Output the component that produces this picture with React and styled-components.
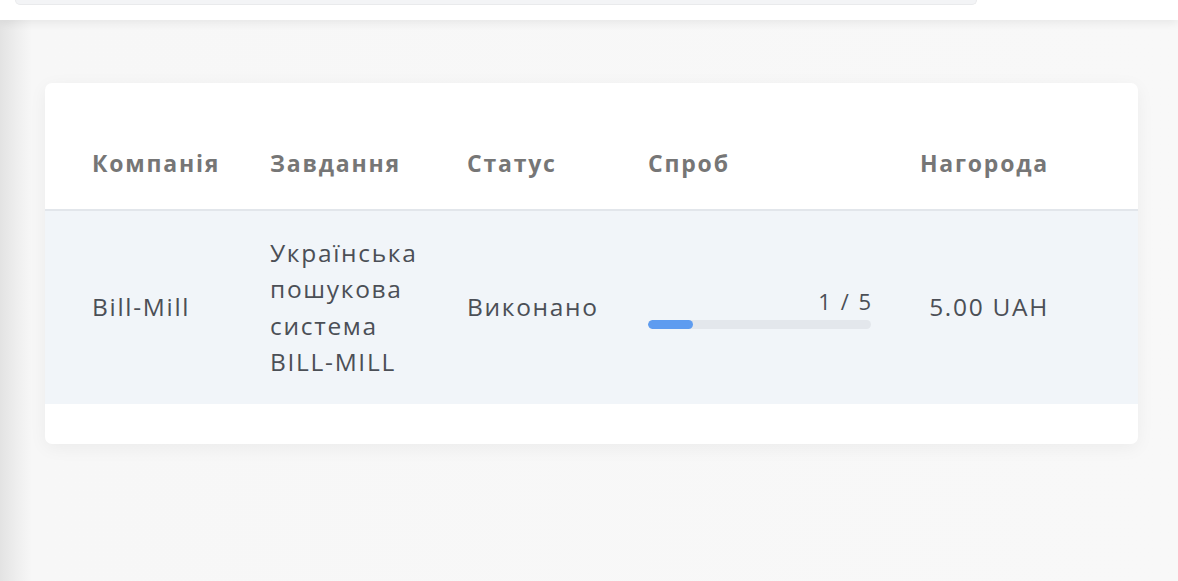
import styled, { createGlobalStyle } from "styled-components";

const GlobalStyle = createGlobalStyle`
  body {
    margin: 0;
    background: #f8f8f8;
    font-family: "Open Sans", "Noto Sans", sans-serif;
  }
`;

const tasks = [
  {
    company: "Bill-Mill",
    task: ["Українська", "пошукова", "система", "BILL-MILL"],
    status: "Виконано",
    tries: 1,
    maxTries: 5,
    reward: "5.00 UAH",
  },
];

const App = () => {
  return (
    <Page>
      <GlobalStyle />
      <TopBar>
        <SearchBox />
      </TopBar>
      <Main>
        <Card>
          <HeadRow>
            <HeadCell>Компанія</HeadCell>
            <HeadCell>Завдання</HeadCell>
            <HeadCell>Статус</HeadCell>
            <HeadCell>Спроб</HeadCell>
            <HeadCell $right>Нагорода</HeadCell>
          </HeadRow>
          {tasks.map((t) => (
            <Row key={t.company}>
              <Cell>{t.company}</Cell>
              <Cell>
                {t.task.map((line) => (
                  <div key={line}>{line}</div>
                ))}
              </Cell>
              <Cell>{t.status}</Cell>
              <Cell>
                <Tries>
                  <Count>{`${t.tries} / ${t.maxTries}`}</Count>
                  <Track>
                    <Fill style={{ width: `${(t.tries / t.maxTries) * 100}%` }} />
                  </Track>
                </Tries>
              </Cell>
              <Cell $right>{t.reward}</Cell>
            </Row>
          ))}
        </Card>
      </Main>
    </Page>
  );
};

const Page = styled.div`
  display: flex;
  flex-direction: column;
  min-height: 581px;
`;

const TopBar = styled.div`
  height: 20px;
  background: #ffffff;
  box-shadow: 0 3px 10px rgba(0, 0, 0, 0.07);
  position: relative;
  z-index: 1;
`;

const SearchBox = styled.div`
  margin-left: 15px;
  width: 960px;
  height: 4px;
  background: #f3f4f6;
  border: 1px solid #e9eaec;
  border-top: none;
  border-radius: 0 0 12px 12px;
`;

const Main = styled.div`
  flex: 1;
  padding: 63px 40px 40px 45px;
  background: linear-gradient(
    to right,
    #e3e3e3 0,
    #efefef 18px,
    #f7f7f7 32px,
    #f8f8f8 100%
  );
`;

const Card = styled.div`
  background: #ffffff;
  border-radius: 7px;
  box-shadow: 0 4px 18px rgba(0, 0, 0, 0.05);
  padding-bottom: 40px;
  overflow: hidden;
`;

const Grid = styled.div`
  display: grid;
  grid-template-columns: 178px 197px 181px 223px 1fr;
  padding: 0 89px 0 47px;
`;

const HeadRow = styled(Grid)`
  height: 128px;
  align-items: end;
  padding-bottom: 31px;
  box-sizing: border-box;
  border-bottom: 2px solid #e2e6eb;
`;

const HeadCell = styled.div`
  font-size: 23px;
  font-weight: 700;
  line-height: 30px;
  color: #767676;
  letter-spacing: 1.8px;
  text-align: ${(p) => (p.$right ? "right" : "left")};
`;

const Row = styled(Grid)`
  background: #f1f5f9;
  height: 193px;
  align-items: center;
`;

const Cell = styled.div`
  font-size: 24.5px;
  line-height: 36.3px;
  color: #4b4f56;
  letter-spacing: 1.7px;
  text-align: ${(p) => (p.$right ? "right" : "left")};
`;

const Tries = styled.div`
  display: flex;
  flex-direction: column;
  align-items: flex-end;
  gap: 5px;
  margin-top: 1px;
`;

const Count = styled.div`
  font-size: 22px;
  line-height: 28px;
  letter-spacing: 2px;
  color: #4b4f56;
  margin-right: -2px;
`;

const Track = styled.div`
  width: 223px;
  height: 9px;
  border-radius: 5px;
  background: #e3e7ec;
  overflow: hidden;
`;

const Fill = styled.div`
  height: 100%;
  border-radius: 5px;
  background: #5e9cf0;
`;

export default App;
